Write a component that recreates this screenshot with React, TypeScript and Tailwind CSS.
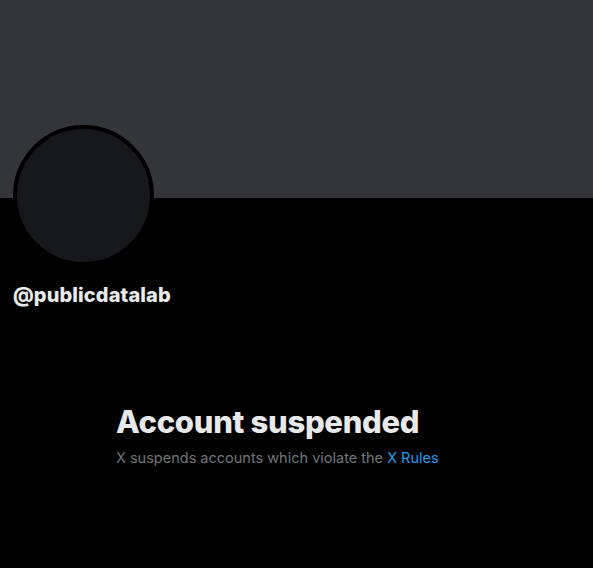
export default function App() {
  return (
    <div
      className="min-h-[568px] w-full bg-black text-[#e7e9ea]"
      style={{ fontFamily: "Inter, 'Liberation Sans', sans-serif" }}
    >
      <div className="h-[198px] bg-[#333639]" />
      <div className="px-[13px]">
        <div className="-mt-[73px] h-[141px] w-[141px] rounded-full border-[4px] border-black bg-[#16181c]" />
        <div className="mt-[17px] text-[20px] font-extrabold leading-[24px] tracking-[0.1px]">
          @publicdatalab
        </div>
      </div>
      <div className="mt-[97px] pl-[116px]">
        <h1 className="text-[31px] font-extrabold leading-[36px] tracking-[-0.3px]">
          Account suspended
        </h1>
        <p className="mt-[8px] text-[14.5px] leading-[20px] text-[#71767b]">
          X suspends accounts which violate the{" "}
          <span className="text-[#1d9bf0]">X Rules</span>
        </p>
      </div>
    </div>
  );
}
